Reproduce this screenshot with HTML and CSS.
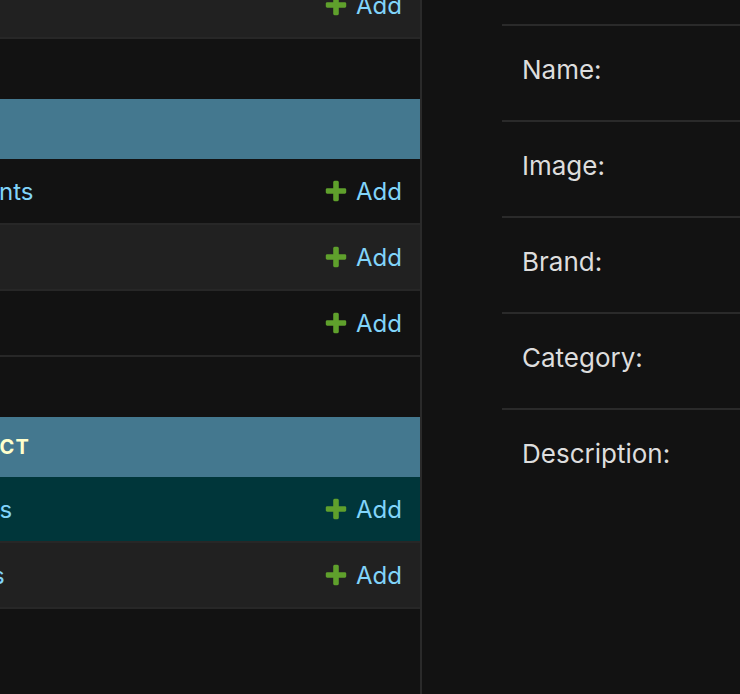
FILE: index.html
```html
<!DOCTYPE html>
<html lang="en">
<head>
<meta charset="utf-8">
<title>Add product</title>
<link rel="stylesheet" href="styles.css">
</head>
<body>
<div class="page">
  <nav class="sidebar">
    <div class="sidebar-inner">
      <div class="module">
        <div class="row row-even"><a class="model" href="#">Users</a><a class="addlink" href="#"><svg viewBox="0 0 1792 1792" aria-hidden="true"><path d="M1600 796v192q0 40-28 68t-68 28h-416v416q0 40-28 68t-68 28h-192q-40 0-68-28t-28-68v-416h-416q-40 0-68-28t-28-68v-192q0-40 28-68t68-28h416v-416q0-40 28-68t68-28h192q40 0 68 28t28 68v416h416q40 0 68 28t28 68z"/></svg>Add</a></div>
      </div>
      <div class="module">
        <div class="caption"><a class="section" href="#">Blog</a></div>
        <div class="row"><a class="model" href="#">Comments</a><a class="addlink" href="#"><svg viewBox="0 0 1792 1792" aria-hidden="true"><path d="M1600 796v192q0 40-28 68t-68 28h-416v416q0 40-28 68t-68 28h-192q-40 0-68-28t-28-68v-416h-416q-40 0-68-28t-28-68v-192q0-40 28-68t68-28h416v-416q0-40 28-68t68-28h192q40 0 68 28t28 68v416h416q40 0 68 28t28 68z"/></svg>Add</a></div>
        <div class="row row-even"><a class="model" href="#">Posts</a><a class="addlink" href="#"><svg viewBox="0 0 1792 1792" aria-hidden="true"><path d="M1600 796v192q0 40-28 68t-68 28h-416v416q0 40-28 68t-68 28h-192q-40 0-68-28t-28-68v-416h-416q-40 0-68-28t-28-68v-192q0-40 28-68t68-28h416v-416q0-40 28-68t68-28h192q40 0 68 28t28 68v416h416q40 0 68 28t28 68z"/></svg>Add</a></div>
        <div class="row"><a class="model" href="#">Tags</a><a class="addlink" href="#"><svg viewBox="0 0 1792 1792" aria-hidden="true"><path d="M1600 796v192q0 40-28 68t-68 28h-416v416q0 40-28 68t-68 28h-192q-40 0-68-28t-28-68v-416h-416q-40 0-68-28t-28-68v-192q0-40 28-68t68-28h416v-416q0-40 28-68t68-28h192q40 0 68 28t28 68v416h416q40 0 68 28t28 68z"/></svg>Add</a></div>
      </div>
      <div class="module">
        <div class="caption"><a class="section" href="#">Product</a></div>
        <div class="row current"><a class="model" href="#">Products</a><a class="addlink" href="#"><svg viewBox="0 0 1792 1792" aria-hidden="true"><path d="M1600 796v192q0 40-28 68t-68 28h-416v416q0 40-28 68t-68 28h-192q-40 0-68-28t-28-68v-416h-416q-40 0-68-28t-28-68v-192q0-40 28-68t68-28h416v-416q0-40 28-68t68-28h192q40 0 68 28t28 68v416h416q40 0 68 28t28 68z"/></svg>Add</a></div>
        <div class="row row-even"><a class="model" href="#">Reviews</a><a class="addlink" href="#"><svg viewBox="0 0 1792 1792" aria-hidden="true"><path d="M1600 796v192q0 40-28 68t-68 28h-416v416q0 40-28 68t-68 28h-192q-40 0-68-28t-28-68v-416h-416q-40 0-68-28t-28-68v-192q0-40 28-68t68-28h416v-416q0-40 28-68t68-28h192q40 0 68 28t28 68v416h416q40 0 68 28t28 68z"/></svg>Add</a></div>
      </div>
    </div>
  </nav>
  <main class="content">
    <fieldset class="form">
      <div class="form-row"><label>Name:</label></div>
      <div class="form-row"><label>Image:</label></div>
      <div class="form-row"><label>Brand:</label></div>
      <div class="form-row"><label>Category:</label></div>
      <div class="form-row form-row-tall"><label>Description:</label></div>
    </fieldset>
  </main>
</div>
</body>
</html>
```

FILE: styles.css
```css
* {
  box-sizing: border-box;
}

html,
body {
  margin: 0;
  background: #121212;
}

body {
  font-family: Inter, "Noto Sans", "DejaVu Sans", sans-serif;
  width: 740px;
  height: 694px;
  overflow: hidden;
}

.page {
  display: flex;
  height: 694px;
}

.sidebar {
  flex: 0 0 422px;
  border-right: 2px solid #2a2a2a;
  overflow: hidden;
}

.sidebar-inner {
  margin-left: -110px;
  margin-top: -27px;
}

.module {
  margin-bottom: 60px;
}

.caption {
  height: 60px;
  background: #44788f;
  display: flex;
  align-items: center;
  padding-left: 34px;
}

.section {
  color: #ffffcc;
  font-weight: 700;
  font-size: 20px;
  letter-spacing: 1px;
  text-transform: uppercase;
  text-decoration: none;
}

.row {
  height: 66px;
  border-bottom: 2px solid #272727;
  display: flex;
  align-items: center;
  justify-content: space-between;
  padding: 0 18px 0 21px;
  font-size: 24px;
}

.row-even {
  background: #212121;
}

.row.current {
  background: #00363a;
}

.model,
.addlink {
  color: #81d4fa;
  text-decoration: none;
}

.addlink {
  display: flex;
  align-items: center;
  gap: 7px;
}

.addlink svg {
  width: 26px;
  height: 26px;
  fill: #5fa02c;
}

.content {
  flex: 1;
  padding: 24px 0 0 80px;
}

.form {
  margin: 0;
  padding: 0;
  border: none;
}

.form-row {
  height: 96px;
  border-top: 2px solid #2a2a2a;
  padding: 28px 20px 0;
}

.form-row-tall {
  height: 300px;
}

.form-row label {
  display: block;
  font-size: 26px;
  color: #dddddd;
}
```
